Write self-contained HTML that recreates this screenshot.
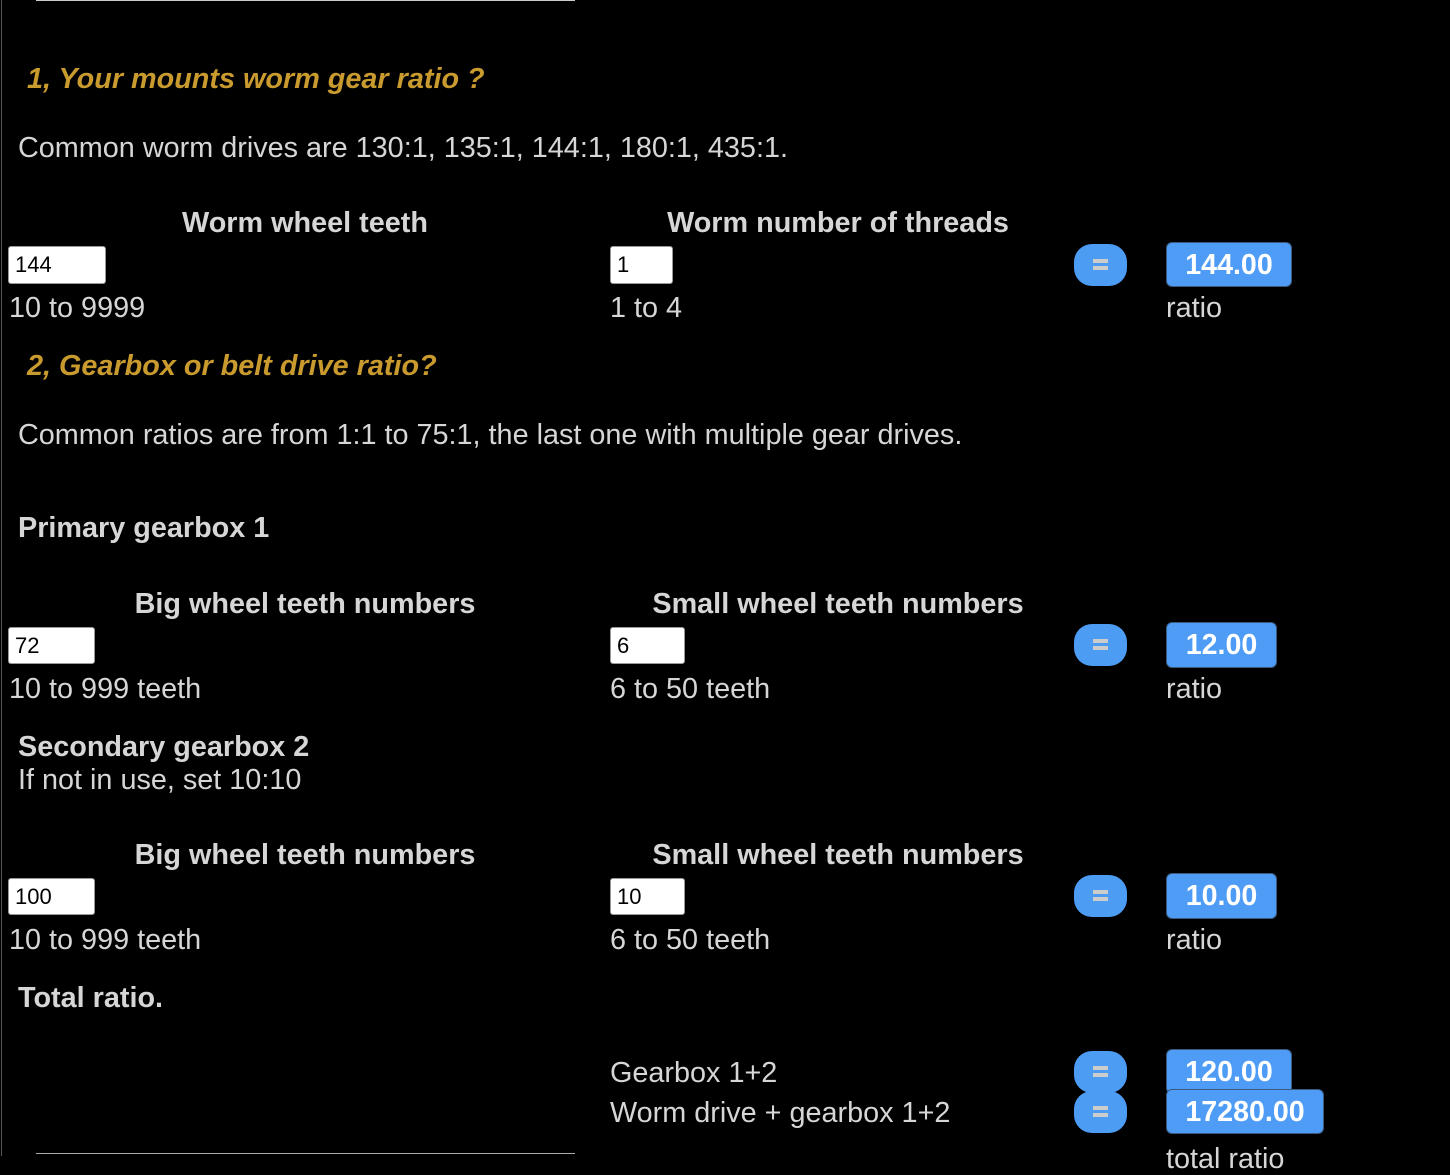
<!DOCTYPE html>
<html><head><meta charset="utf-8"><style>
body{margin:0;width:1450px;height:1156px;background:#000;overflow:hidden;position:relative;font-family:"Liberation Sans",Arial,sans-serif;color:#d6d6d6}
.t{position:absolute;white-space:nowrap;font-size:28.8px;line-height:30px;margin-top:1px}
.b{font-weight:bold}
.h{color:#c99a2e;font-weight:bold;font-style:italic}
.c{transform:translateX(-50%)}
.in{position:absolute;background:#fff;border:1px solid #999;border-radius:3px;box-sizing:border-box;color:#000;font-size:22px;line-height:36px;padding-left:6px}
.eq{position:absolute;width:53px;height:42px;background:#4d9cf4;border-radius:18px}
.eq:before,.eq:after{content:"";position:absolute;left:19px;width:15px;height:4px;background:#ccc}
.eq:before{top:15px}.eq:after{top:22px}
.v{position:absolute;background:#4f9cf6;border:1px solid #3c5a80;border-radius:6px;box-sizing:border-box;color:#fff;font-weight:bold;font-size:28.6px;text-align:center}
</style></head><body>
<div style="position:absolute;left:1px;top:0;width:1px;height:1156px;background:#555"></div>
<div style="position:absolute;left:36px;top:0;width:539px;height:1px;background:#ccc"></div>
<div style="position:absolute;left:36px;top:1153px;width:539px;height:1px;background:#aaa"></div>

<div class="t h" style="left:27px;top:63px">1, Your mounts worm gear ratio ?</div>
<div class="t" style="left:18px;top:132px">Common worm drives are 130:1, 135:1, 144:1, 180:1, 435:1.</div>
<div class="t b c" style="left:305px;top:207px">Worm wheel teeth</div>
<div class="t b c" style="left:838px;top:207px">Worm number of threads</div>
<div class="in" style="left:8px;top:246px;width:98px;height:38px">144</div>
<div class="in" style="left:610px;top:246px;width:63px;height:38px">1</div>
<div class="eq" style="left:1074px;top:244px"></div>
<div class="v" style="left:1166px;top:242px;width:126px;height:45px;line-height:45px">144.00</div>
<div class="t" style="left:9px;top:292px">10 to 9999</div>
<div class="t" style="left:610px;top:292px">1 to 4</div>
<div class="t" style="left:1166px;top:292px">ratio</div>

<div class="t h" style="left:27px;top:350px">2, Gearbox or belt drive ratio?</div>
<div class="t" style="left:18px;top:419px">Common ratios are from 1:1 to 75:1, the last one with multiple gear drives.</div>
<div class="t b" style="left:18px;top:512px">Primary gearbox 1</div>
<div class="t b c" style="left:305px;top:588px">Big wheel teeth numbers</div>
<div class="t b c" style="left:838px;top:588px">Small wheel teeth numbers</div>
<div class="in" style="left:8px;top:627px;width:87px;height:37px">72</div>
<div class="in" style="left:610px;top:627px;width:75px;height:37px">6</div>
<div class="eq" style="left:1074px;top:624px"></div>
<div class="v" style="left:1166px;top:622px;width:111px;height:46px;line-height:45px">12.00</div>
<div class="t" style="left:9px;top:673px">10 to 999 teeth</div>
<div class="t" style="left:610px;top:673px">6 to 50 teeth</div>
<div class="t" style="left:1166px;top:673px">ratio</div>

<div class="t b" style="left:18px;top:731px">Secondary gearbox 2</div>
<div class="t" style="left:18px;top:764px">If not in use, set 10:10</div>
<div class="t b c" style="left:305px;top:839px">Big wheel teeth numbers</div>
<div class="t b c" style="left:838px;top:839px">Small wheel teeth numbers</div>
<div class="in" style="left:8px;top:878px;width:87px;height:37px">100</div>
<div class="in" style="left:610px;top:878px;width:75px;height:37px">10</div>
<div class="eq" style="left:1074px;top:875px"></div>
<div class="v" style="left:1166px;top:873px;width:111px;height:46px;line-height:45px">10.00</div>
<div class="t" style="left:9px;top:924px">10 to 999 teeth</div>
<div class="t" style="left:610px;top:924px">6 to 50 teeth</div>
<div class="t" style="left:1166px;top:924px">ratio</div>

<div class="t b" style="left:18px;top:982px">Total ratio.</div>
<div class="t" style="left:610px;top:1057px">Gearbox 1+2</div>
<div class="t" style="left:610px;top:1097px">Worm drive + gearbox 1+2</div>
<div class="eq" style="left:1074px;top:1051px"></div>
<div class="eq" style="left:1074px;top:1091px"></div>
<div class="v" style="left:1166px;top:1049px;width:126px;height:45px;line-height:45px">120.00</div>
<div class="v" style="left:1166px;top:1089px;width:158px;height:45px;line-height:45px">17280.00</div>
<div class="t" style="left:1166px;top:1143px">total ratio</div>
</body></html>
